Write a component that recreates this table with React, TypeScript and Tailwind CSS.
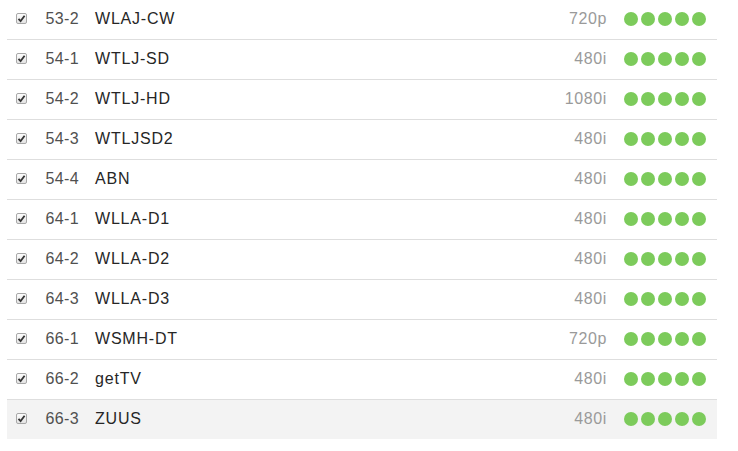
import React from 'react';

const channels = [
    { num: '53-2', name: 'WLAJ-CW', res: '720p' },
    { num: '54-1', name: 'WTLJ-SD', res: '480i' },
    { num: '54-2', name: 'WTLJ-HD', res: '1080i' },
    { num: '54-3', name: 'WTLJSD2', res: '480i' },
    { num: '54-4', name: 'ABN', res: '480i' },
    { num: '64-1', name: 'WLLA-D1', res: '480i' },
    { num: '64-2', name: 'WLLA-D2', res: '480i' },
    { num: '64-3', name: 'WLLA-D3', res: '480i' },
    { num: '66-1', name: 'WSMH-DT', res: '720p' },
    { num: '66-2', name: 'getTV', res: '480i' },
    { num: '66-3', name: 'ZUUS', res: '480i' },
];

const Check = () => (
    <span className="w-[11px] h-[11px] rounded-[2px] border border-[#a8a8a8] bg-gradient-to-b from-[#fdfdfd] to-[#e4e4e4] flex items-center justify-center shrink-0">
        <svg width="9" height="9" viewBox="0 0 9 9">
            <path d="M1.5 4.8 L3.6 7 L7.6 1.8" stroke="#333" strokeWidth="1.8" fill="none" />
        </svg>
    </span>
);

export default function App() {
    return (
        <div className="w-[738px] h-[451px] bg-white pl-[7px] pr-[21px]" style={{ fontFamily: '"Liberation Sans", Arial, sans-serif' }}>
            {channels.map((c, i) => {
                const last = i === channels.length - 1;
                return (
                    <div
                        key={c.num}
                        className={`flex items-center pl-[9px] pr-[11px] pb-[2px] ${last ? 'bg-[#f3f3f3] h-[39px]' : 'h-[40px] border-b border-[#dedede]'}`}
                    >
                        <Check />
                        <span className="w-[52px] text-right text-[16px] tracking-[0.4px] text-[#505050]">{c.num}</span>
                        <span className="flex-1 pl-[16px] text-[16px] tracking-[0.8px] text-[#262626]">{c.name}</span>
                        <span className="text-[16px] tracking-[0.6px] text-[#9a9a9a]">{c.res}</span>
                        <div className="flex gap-[3px] ml-[17px] mt-[1px]">
                            {[0, 1, 2, 3, 4].map((d) => (
                                <span key={d} className="w-[14px] h-[14px] rounded-full bg-[#7ccb5b]" />
                            ))}
                        </div>
                    </div>
                );
            })}
        </div>
    );
}
